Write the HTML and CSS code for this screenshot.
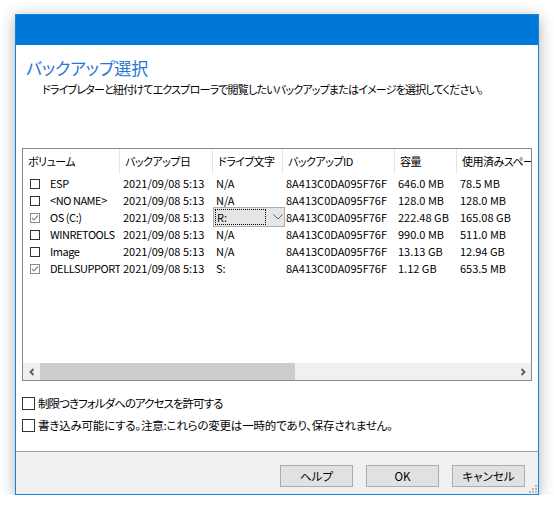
FILE: index.html
```html
<!DOCTYPE html>
<html lang="ja">
<head>
<meta charset="utf-8">
<title>バックアップ選択</title>
<link rel="stylesheet" href="styles.css">
</head>
<body>
<div class="window">
  <div class="titlebar"></div>
  <div class="content">
    <h1 class="main">バックアップ選択</h1>
    <p class="sub">ドライブレターと紐付けてエクスプローラで閲覧したいバックアップまたはイメージを選択してください。</p>
    <div class="list">
      <div class="grid">
        <div class="row head">
          <div class="c c1">ボリューム</div>
          <div class="c c2">バックアップ日</div>
          <div class="c c3">ドライブ文字</div>
          <div class="c c4">バックアップID</div>
          <div class="c c5">容量</div>
          <div class="c c6">使用済みスペース</div>
        </div>
        <div class="row">
          <div class="c c1"><span class="lcb"></span><span class="name">ESP</span></div>
          <div class="c c2">2021/09/08 5:13</div>
          <div class="c c3">N/A</div>
          <div class="c c4">8A413C0DA095F76F</div>
          <div class="c c5">646.0 MB</div>
          <div class="c c6">78.5 MB</div>
        </div>
        <div class="row">
          <div class="c c1"><span class="lcb"></span><span class="name">&lt;NO NAME&gt;</span></div>
          <div class="c c2">2021/09/08 5:13</div>
          <div class="c c3">N/A</div>
          <div class="c c4">8A413C0DA095F76F</div>
          <div class="c c5">128.0 MB</div>
          <div class="c c6">128.0 MB</div>
        </div>
        <div class="row">
          <div class="c c1"><span class="lcb on"><svg viewBox="0 0 10 10" width="10" height="10"><path d="M2 5 L4 7 L8 2.5" fill="none" stroke="#8a8a8a" stroke-width="1.2"/></svg></span><span class="name">OS (C:)</span></div>
          <div class="c c2">2021/09/08 5:13</div>
          <div class="c c3 editing">
            <div class="combo">
              <span class="focus">R:</span>
              <svg class="chev" viewBox="0 0 10 6" width="10" height="6"><path d="M0.5 0.5 L5 5 L9.5 0.5" fill="none" stroke="#606060" stroke-width="1"/></svg>
            </div>
          </div>
          <div class="c c4">8A413C0DA095F76F</div>
          <div class="c c5">222.48 GB</div>
          <div class="c c6">165.08 GB</div>
        </div>
        <div class="row">
          <div class="c c1"><span class="lcb"></span><span class="name">WINRETOOLS</span></div>
          <div class="c c2">2021/09/08 5:13</div>
          <div class="c c3">N/A</div>
          <div class="c c4">8A413C0DA095F76F</div>
          <div class="c c5">990.0 MB</div>
          <div class="c c6">511.0 MB</div>
        </div>
        <div class="row">
          <div class="c c1"><span class="lcb"></span><span class="name">Image</span></div>
          <div class="c c2">2021/09/08 5:13</div>
          <div class="c c3">N/A</div>
          <div class="c c4">8A413C0DA095F76F</div>
          <div class="c c5">13.13 GB</div>
          <div class="c c6">12.94 GB</div>
        </div>
        <div class="row">
          <div class="c c1"><span class="lcb on"><svg viewBox="0 0 10 10" width="10" height="10"><path d="M2 5 L4 7 L8 2.5" fill="none" stroke="#8a8a8a" stroke-width="1.2"/></svg></span><span class="name">DELLSUPPORT</span></div>
          <div class="c c2">2021/09/08 5:13</div>
          <div class="c c3">S:</div>
          <div class="c c4">8A413C0DA095F76F</div>
          <div class="c c5">1.12 GB</div>
          <div class="c c6">653.5 MB</div>
        </div>
      </div>
      <div class="hscroll">
        <div class="sbtn"><svg viewBox="0 0 8 8" width="8" height="8"><path d="M5.5 1 L2.5 4 L5.5 7" fill="none" stroke="#606060" stroke-width="2"/></svg></div>
        <div class="track"><div class="thumb"></div></div>
        <div class="sbtn"><svg viewBox="0 0 8 8" width="8" height="8"><path d="M2.5 1 L5.5 4 L2.5 7" fill="none" stroke="#606060" stroke-width="2"/></svg></div>
      </div>
    </div>
    <div class="options">
      <label class="opt tight"><span class="cb"></span>制限つきフォルダへのアクセスを許可する</label>
      <label class="opt"><span class="cb"></span>書き込み可能にする。注意:これらの変更は一時的であり、保存されません。</label>
    </div>
  </div>
  <div class="footer">
    <button class="btn">ヘルプ</button>
    <button class="btn">OK</button>
    <button class="btn">キャンセル</button>
    <svg class="grip" viewBox="0 0 8 8" width="8" height="8">
      <rect x="6" y="0" width="2" height="2" fill="#bcbcbc"/>
      <rect x="3" y="3" width="2" height="2" fill="#bcbcbc"/>
      <rect x="6" y="3" width="2" height="2" fill="#bcbcbc"/>
      <rect x="0" y="6" width="2" height="2" fill="#bcbcbc"/>
      <rect x="3" y="6" width="2" height="2" fill="#bcbcbc"/>
      <rect x="6" y="6" width="2" height="2" fill="#bcbcbc"/>
    </svg>
  </div>
</div>
</body>
</html>
```
FILE: styles.css
```css
* { box-sizing: border-box; }
html, body { margin: 0; padding: 0; background: #ffffff; }
body {
  font-family: "Noto Sans CJK JP", sans-serif;
  font-size: 12px;
  font-feature-settings: "palt";
  color: #000;
  padding: 14px 0 0 15px;
}
.window {
  width: 524px;
  height: 481px;
  border: 1px solid #1883d7;
  background: #ffffff;
  box-shadow: 0 3px 14px rgba(0,0,0,0.32);
  display: flex;
  flex-direction: column;
}
.titlebar {
  height: 30px;
  background: #0078d7;
  flex: none;
}
.content {
  flex: 1;
  padding: 13px 6px 0 6px;
  display: flex;
  flex-direction: column;
}
.main {
  margin: 0 0 0 4px;
  font-size: 17px;
  line-height: 20px;
  font-weight: normal;
  color: #2a76d6;
  letter-spacing: -0.2px;
}
.sub {
  margin: 3px 0 0 20px;
  line-height: 16px;
  font-size: 11px;
  letter-spacing: -0.8px;
}
.list {
  margin-top: 51px;
  height: 233px;
  border: 1px solid #828790;
  display: flex;
  flex-direction: column;
  overflow: hidden;
}
.grid { flex: 1; overflow: hidden; }
.row {
  display: grid;
  grid-template-columns: 97px 93px 70px 112px 62px 90px;
  height: 17px;
  line-height: 17px;
  white-space: nowrap;
}
.row.head { height: 25px; line-height: 25px; margin-bottom: 1px; }
.c { padding-left: 3px; overflow: hidden; position: relative; font-size: 11px; }
.head .c { padding-left: 5px; border-right: 1px solid #e5e5e5; letter-spacing: -0.5px; }
.c1 { padding-left: 7px; display: flex; align-items: center; }
.head .c1 { padding-left: 5px; }
.name { letter-spacing: -0.45px; }
.lcb {
  width: 10px; height: 10px;
  border: 1px solid #333;
  margin-right: 10px;
  flex: none;
  position: relative;
}
.lcb.on { border-color: #8a8a8a; }
.lcb svg { position: absolute; left: -1px; top: -1px; }
.c3.editing { overflow: visible; }
.combo {
  position: absolute;
  left: 0; top: -2px;
  width: 72px; height: 20px;
  background: #e5e5e5;
  border: 1px solid #adadad;
  display: flex;
  align-items: center;
  padding: 0 0 0 1px;
  z-index: 2;
}
.focus {
  width: 51px; height: 16px;
  border: 1px dotted #000;
  line-height: 14px;
  padding-left: 1px;
}
.chev { margin-left: 7px; }
.hscroll {
  height: 17px;
  flex: none;
  display: flex;
  background: #f0f0f0;
}
.sbtn {
  width: 17px; flex: none;
  display: flex; align-items: center; justify-content: center;
}
.track { flex: 1; }
.thumb { width: 255px; height: 100%; background: #cdcdcd; }
.options { margin-top: 11px; }
.opt {
  display: flex;
  align-items: center;
  height: 22px;
  font-size: 11.5px;
  letter-spacing: -0.2px;
}
.opt.tight { letter-spacing: -0.95px; }
.cb {
  width: 13px; height: 13px;
  border: 1px solid #333;
  background: #fff;
  margin-right: 3px;
  flex: none;
}
.footer {
  height: 43px;
  flex: none;
  border-top: 1px solid #a0a0a0;
  background: #f0f0f0;
  display: flex;
  justify-content: flex-end;
  align-items: flex-start;
  padding: 13px 13px 0 0;
  gap: 13px;
  position: relative;
}
.btn {
  width: 73px; height: 22px;
  background: #e1e1e1;
  border: 1px solid #adadad;
  font-family: inherit;
  font-size: 11.5px;
  font-feature-settings: "palt";
  color: #000;
  padding: 0;
  line-height: 20px;
}
.grip { position: absolute; right: 1px; bottom: 1px; }
```
